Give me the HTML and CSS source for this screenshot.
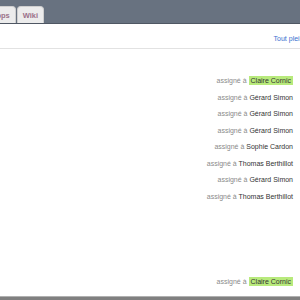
FILE: index.html
```html
<!DOCTYPE html>
<html lang="fr">
<head>
    <meta charset="UTF-8">
    <title>Tâches</title>
    <link rel="stylesheet" href="styles.css">
</head>
<body>

    <!-- Barre des onglets -->
    <div class="topbar">
        <div class="tab tab-cut">Apps</div>
        <div class="tab">Wiki</div>
    </div>

    <!-- Barre d'outils -->
    <div class="toolbar">
        <a class="link" href="#">Tout plein écran</a>
    </div>

    <div class="list">
        <div class="row">assigné à <span class="name hl">Claire Cornic</span></div>
        <div class="row">assigné à <span class="name">Gérard Simon</span></div>
        <div class="row">assigné à <span class="name">Gérard Simon</span></div>
        <div class="row">assigné à <span class="name">Gérard Simon</span></div>
        <div class="row">assigné à <span class="name">Sophie Cardon</span></div>
        <div class="row">assigné à <span class="name">Thomas Berthillot</span></div>
        <div class="row">assigné à <span class="name">Gérard Simon</span></div>
        <div class="row">assigné à <span class="name">Thomas Berthillot</span></div>
    </div>

    <div class="list bottom">
        <div class="row">assigné à <span class="name hl">Claire Cornic</span></div>
    </div>

    <div class="footer-line"></div>
</body>
</html>
```

FILE: styles.css
```css
body {
    margin: 0;
    width: 300px;
    height: 300px;
    display: flex;
    flex-direction: column;
    background-color: #fff;
    font-family: "Liberation Sans", Arial, sans-serif;
    overflow: hidden;
}

.topbar {
    height: 23px;
    background-color: #687280;
    border-bottom: 1px solid #4f5763;
    display: flex;
    align-items: flex-end;
    gap: 1px;
    overflow: hidden;
}

.tab {
    height: 17px;
    padding: 0 5px;
    background-color: #ececec;
    border: 1px solid #cfcfcf;
    border-bottom: none;
    border-radius: 4px 4px 0 0;
    font-size: 7.5px;
    font-weight: bold;
    color: #9a7088;
    line-height: 17px;
    box-sizing: border-box;
}

.tab-cut {
    margin-left: -15px;
}

.toolbar {
    height: 24px;
    display: flex;
    align-items: center;
    justify-content: flex-end;
    border-bottom: 1px solid #e2e2e2;
    overflow: hidden;
    white-space: nowrap;
}

.link {
    font-size: 7px;
    color: #3a6fcf;
    text-decoration: none;
    margin-right: -23px;
    padding-top: 4px;
}

.list {
    padding-top: 24px;
    padding-right: 7px;
}

.row {
    height: 16.5px;
    line-height: 16.5px;
    text-align: right;
    font-size: 7px;
    color: #8a8a8a;
}

.name {
    color: #333;
}

.hl {
    background-color: #b8ea7c;
    padding: 1px 2px;
}

.bottom {
    margin-top: auto;
    padding-top: 0;
    padding-bottom: 6px;
}

.footer-line {
    height: 3px;
    background-color: #808080;
    border-top: 1px solid #b0b0b0;
}
```
